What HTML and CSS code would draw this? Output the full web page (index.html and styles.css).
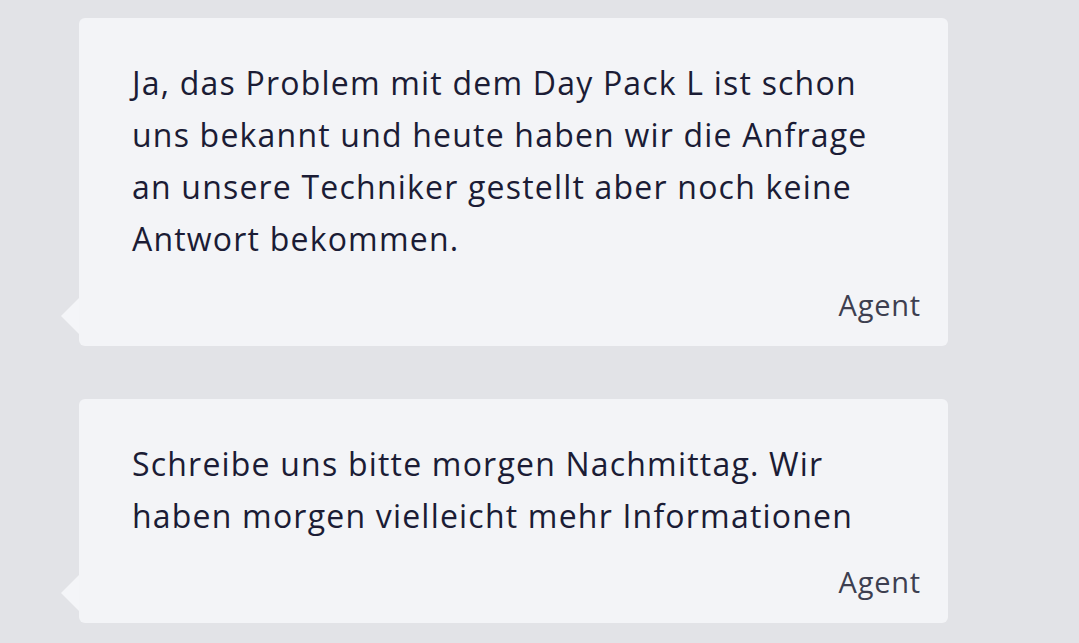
FILE: index.html
```html
<!DOCTYPE html>
<html lang="de">
<head>
<meta charset="utf-8">
<title>Chat</title>
<link rel="stylesheet" href="styles.css">
</head>
<body>
<div class="chat">
  <div class="bubble">
    <p class="msg">Ja, das Problem mit dem Day Pack L ist schon<br>uns bekannt und heute haben wir die Anfrage<br>an unsere Techniker gestellt aber noch keine<br>Antwort bekommen.</p>
    <div class="author">Agent</div>
  </div>
  <div class="bubble">
    <p class="msg">Schreibe uns bitte morgen Nachmittag. Wir<br>haben morgen vielleicht mehr Informationen</p>
    <div class="author">Agent</div>
  </div>
</div>
</body>
</html>
```

FILE: styles.css
```css
html, body {
  margin: 0;
  padding: 0;
  background: #e2e3e7;
}
body {
  font-family: "Open Sans", "Noto Sans", sans-serif;
  color: #1b1c35;
}
.chat {
  display: flex;
  flex-direction: column;
  gap: 53px;
  padding: 18px 0 0 79px;
  width: 869px;
}
.bubble {
  position: relative;
  background: #f3f4f7;
  border-radius: 6px;
  padding: 39px 27px 21px 53px;
}
.bubble::before {
  content: "";
  position: absolute;
  left: -18px;
  bottom: 12px;
  width: 0;
  height: 0;
  border-top: 18px solid transparent;
  border-bottom: 18px solid transparent;
  border-right: 18px solid #f4f5f8;
}
.msg {
  margin: 0;
  font-size: 32px;
  line-height: 52px;
  font-weight: 400;
  letter-spacing: 1.2px;
  white-space: nowrap;
}
.author {
  margin-top: 20px;
  text-align: right;
  font-size: 29px;
  line-height: 40px;
  letter-spacing: 0.8px;
  color: #3d3f50;
}
```
